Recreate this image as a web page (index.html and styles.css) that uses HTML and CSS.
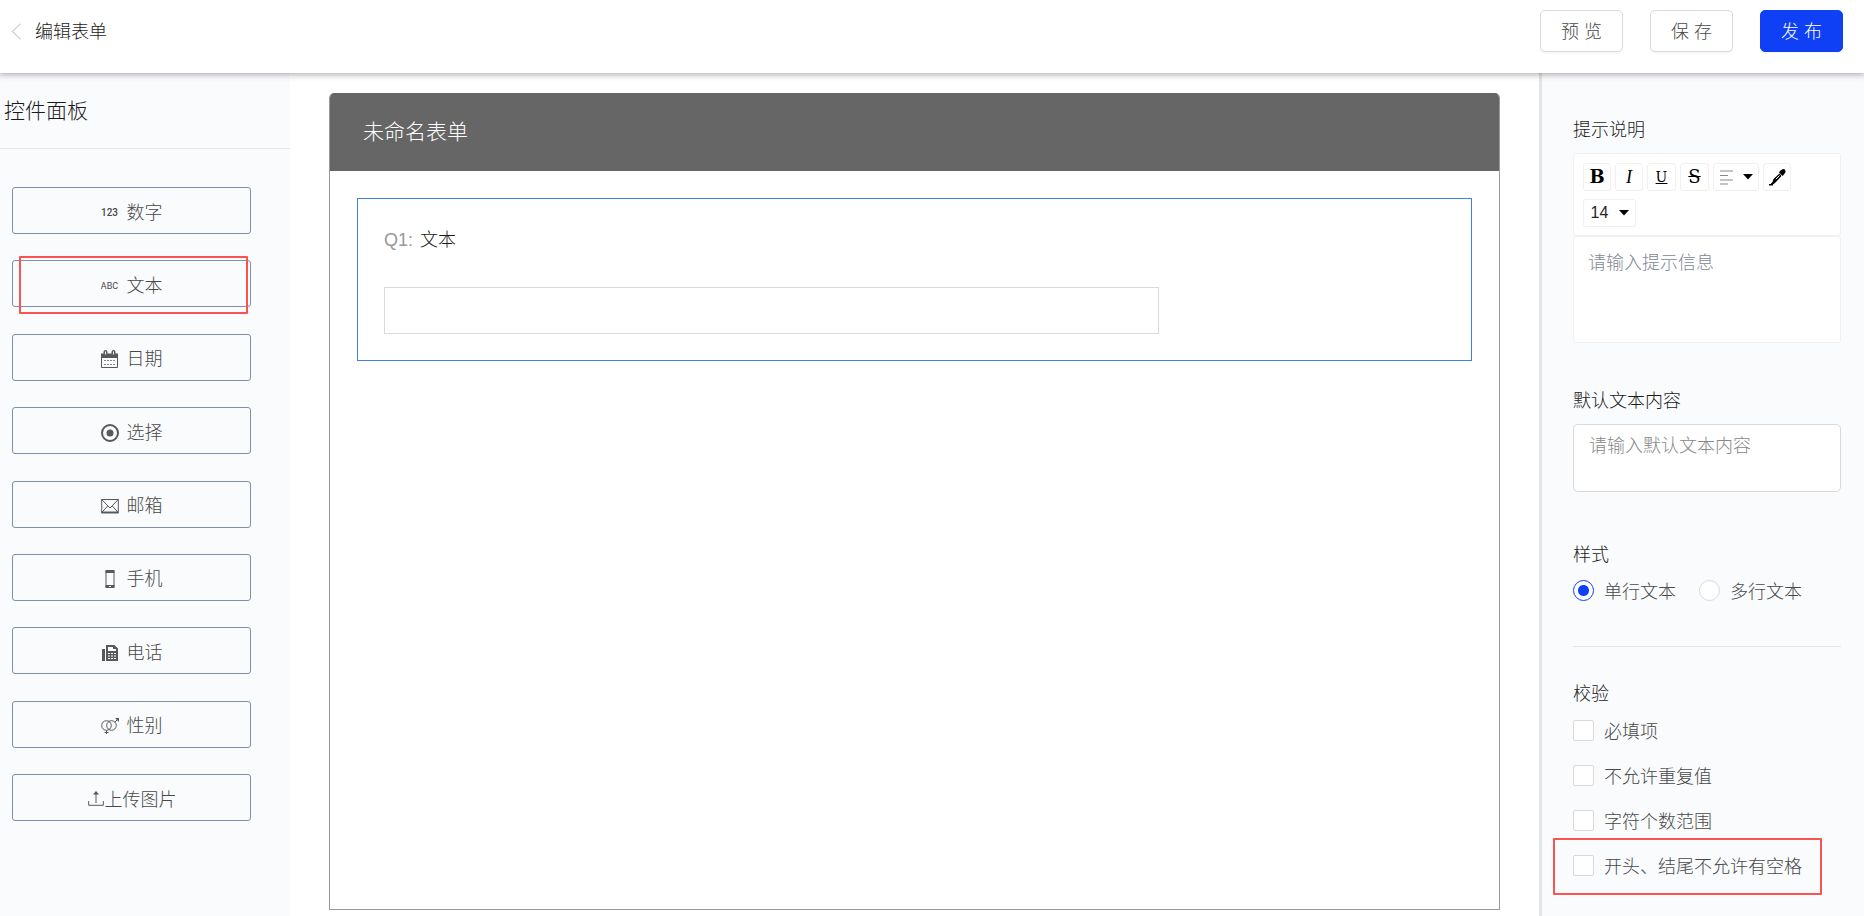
FILE: index.html
```html
<!DOCTYPE html>
<html lang="zh-CN">
<head>
<meta charset="utf-8">
<title>编辑表单</title>
<link rel="stylesheet" href="styles.css">
</head>
<body>
<header class="topbar">
  <a class="back" href="#">
    <svg class="back-icon" viewBox="0 0 12 20" aria-hidden="true"><path d="M10.500 1.500 1.500 10l9 8.500"/></svg>
    <span>编辑表单</span>
  </a>
  <div class="actions">
    <button class="btn" type="button">预 览</button>
    <button class="btn" type="button">保 存</button>
    <button class="btn btn-primary" type="button">发 布</button>
  </div>
</header>
<main class="workspace">
  <aside class="palette">
    <h2 class="palette-title">控件面板</h2>
    <ul class="widgets">
      <li class="widget-item"><button class="widget" type="button"><span class="icon icon-num">123</span>数字</button></li>
      <li class="widget-item"><button class="widget" type="button"><span class="icon icon-abc">ABC</span>文本</button><span class="mark mark-widget"></span></li>
      <li class="widget-item"><button class="widget" type="button"><svg class="icon" viewBox="0 0 18 18"><path class="fill" d="M0 3.500h2.500V2a2 2 0 0 1 4 0v1.500h4V2a2 2 0 0 1 4 0v1.500H17V8H0z"/><path d="M.5 7v10.500h16V7"/><path class="hole" d="M4.500 1.500v3M12.500 1.500v3"/><path class="dots" stroke-dasharray="2 1" d="M3 10.500h11M3 14.500h11"/></svg>日期</button></li>
      <li class="widget-item"><button class="widget" type="button"><svg class="icon" viewBox="0 0 18 18"><circle class="thick" cx="9" cy="9" r="8"/><circle class="fill" cx="9" cy="9" r="3.500"/></svg>选择</button></li>
      <li class="widget-item"><button class="widget" type="button"><svg class="icon" viewBox="0 0 18 18"><path d="M.7 2.500h16.600v13H.7zM.7 2.500 9 11l8.300-8.500M.7 15.500l6-6.500M17.300 15.500l-6-6.500"/><path class="thick" d="M.5 15.500h17"/></svg>邮箱</button></li>
      <li class="widget-item"><button class="widget" type="button"><svg class="icon" viewBox="0 0 18 18"><rect x="5" y=".5" width="8" height="17" rx="1"/><path class="fill" d="M4.500 0h9v3h-9zM4.500 15h9v3h-9z"/><path class="hole" d="M8 16.500h2"/></svg>手机</button></li>
      <li class="widget-item"><button class="widget" type="button"><svg class="icon" viewBox="0 0 18 18"><path class="fill" d="M1 5h3v12H1zM5 7h12v10H5z"/><path class="thick" d="M6 8V2h7l3 3v3"/><path class="fill" d="M12 1v4h4z"/><path class="hole" d="M7 9.500h8M7 12h8M7 14.500h8" stroke-dasharray="2 1"/></svg>电话</button></li>
      <li class="widget-item"><button class="widget" type="button"><svg class="icon" viewBox="0 0 18 18"><circle cx="5.500" cy="8.500" r="4.800"/><circle cx="10.500" cy="8.500" r="4.800"/><path d="M5.500 13.500V17M3.500 15.500h4M14 5l3-3"/><path class="fill" d="M14 1h4v4z"/></svg>性别</button></li>
      <li class="widget-item"><button class="widget widget-tight" type="button"><svg class="icon" viewBox="0 0 18 18"><path d="M1.700 10v4.300h14.600V10"/><path d="M9 12V1.500"/><path class="fill" d="M9 0 6 3.500h6z"/></svg>上传图片</button></li>
    </ul>
  </aside>
  <section class="canvas">
    <div class="form">
      <h1 class="form-title">未命名表单</h1>
      <div class="form-body">
        <div class="question">
          <label class="question-label" for="q1"><span class="question-no">Q1:</span> 文本</label>
          <input class="question-input" id="q1" type="text">
        </div>
      </div>
    </div>
  </section>
  <aside class="settings">
    <h3 class="label">提示说明</h3>
    <div class="editor">
      <div class="toolbar">
        <button class="tool tool-bold" type="button" aria-label="加粗">B</button>
        <button class="tool tool-italic" type="button" aria-label="斜体">I</button>
        <button class="tool tool-under" type="button" aria-label="下划线">U</button>
        <button class="tool tool-strike" type="button" aria-label="删除线">S</button>
        <button class="tool tool-align" type="button" aria-label="对齐">
          <svg class="align-icon" viewBox="0 0 14 15"><path d="M0 1h13M0 5.500h8M0 10h13M0 14h8"/></svg>
          <svg class="caret" viewBox="0 0 10 6"><path d="M0 0h10L5 5.500z"/></svg>
        </button>
        <button class="tool" type="button" aria-label="画笔">
          <svg class="pen" viewBox="0 0 17 17"><path d="M11 2l2-1.500q2-1 3 .5t0 3L14.500 6l-1 1L10 3.500z"/><path d="M10.500 4.500 4.500 10l-1 3-1.500 1.500v1H4L6.500 13.500l6-6.500z"/><path class="shine" d="M10.500 6.500 7 10.200"/><path d="M0 15h4v1.500H0z"/></svg>
        </button>
        <span class="size">
          <select class="size-select" aria-label="字号"><option>14</option></select>
          <svg class="caret" viewBox="0 0 10 6"><path d="M0 0h10L5 5.500z"/></svg>
        </span>
      </div>
      <textarea class="editor-text" aria-label="提示说明" placeholder="请输入提示信息"></textarea>
    </div>
    <label class="label" for="default-text">默认文本内容</label>
    <textarea class="default-text" id="default-text" placeholder="请输入默认文本内容"></textarea>
    <h3 class="label">样式</h3>
    <div class="radios">
      <label class="choice"><input class="radio" type="radio" name="style" checked>单行文本</label>
      <label class="choice"><input class="radio" type="radio" name="style">多行文本</label>
    </div>
    <hr class="divider">
    <h3 class="label">校验</h3>
    <div class="checks">
      <label class="choice"><input class="check" type="checkbox">必填项</label>
      <label class="choice"><input class="check" type="checkbox">不允许重复值</label>
      <label class="choice"><input class="check" type="checkbox">字符个数范围</label>
      <label class="choice"><input class="check" type="checkbox">开头、结尾不允许有空格<span class="mark mark-check"></span></label>
    </div>
  </aside>
</main>
</body>
</html>
```
FILE: styles.css
```css
* { box-sizing: border-box; }
body {
  margin: 0;
  min-height: 100vh;
  display: flex;
  flex-direction: column;
  background: #fff;
  color: #484848;
  font-family: "Liberation Sans", "Noto Sans CJK SC", sans-serif;
  font-size: 18px;
  font-weight: 300;
  line-height: 24px;
}
button, input, textarea, select { font: inherit; color: inherit; }
h1, h2, h3, ul { margin: 0; padding: 0; font-weight: 300; list-style: none; }

.topbar {
  position: relative;
  z-index: 1;
  display: flex;
  justify-content: space-between;
  align-items: flex-start;
  height: 73px;
  padding: 10px 21px 0 11px;
  background: #fff;
  box-shadow: 0 1px 6px 1px rgba(0, 0, 0, .3);
}
.back {
  display: flex;
  align-items: center;
  gap: 13px;
  height: 43px;
  color: #1a1a1a;
  text-decoration: none;
}
.back-icon { width: 11px; height: 19px; fill: none; stroke: #ccc; stroke-width: 1.2; }
.actions { display: flex; gap: 27px; }
.btn {
  width: 83px;
  height: 42px;
  padding: 2px 0 0;
  border: 1px solid #d9d9d9;
  border-radius: 5px;
  background: #fff;
  box-shadow: 0 2px 1px rgba(0, 0, 0, .03);
}
.btn-primary { border-color: #0f40f5; background: #0f40f5; color: #fff; }

.workspace { flex: 1; display: flex; }
.palette { width: 290px; flex: none; background: #fafbfd; }
.palette-title {
  padding: 24px 4px;
  border-bottom: 1px solid #e4e6e9;
  font-size: 21px;
  line-height: 27px;
  color: #1a1a1a;
}
.widgets {
  display: flex;
  flex-direction: column;
  justify-content: space-between;
  min-height: 634px;
  margin: 38px 39px 0 12px;
}
.widget-item { position: relative; display: flex; }
.widget {
  flex: 1;
  display: flex;
  align-items: center;
  justify-content: center;
  gap: 8px;
  height: 47px;
  padding: 4px 0 0;
  border: 1px solid #8090a8;
  border-radius: 3px;
  background: #fafbfd;
}
.widget-tight { gap: 0; }
.icon { width: 18px; height: 18px; line-height: 18px; fill: none; stroke: #595959; stroke-width: 1; }
.icon .fill { fill: #595959; stroke: none; }
.icon .thick { stroke-width: 2; }
.icon .hole { stroke: #fafbfd; }
.icon .dots { stroke: #888; }
.icon-num, .icon-abc { font-family: Roboto, sans-serif; text-align: center; }
.icon-num { font-size: 10px; font-weight: 500; }
.icon-abc { font-size: 9px; font-weight: 400; }

.mark { position: absolute; border: 2px solid #fa5350; border-radius: 1px; pointer-events: none; }
.mark-widget { inset: -4px 3px -7px 7px; }
.mark-check { inset: -17px -20px -16px -20px; }

.canvas { flex: 1; display: flex; padding: 20px 39px 6px; }
.form { flex: 1; border: 1px solid #999; border-top: 0; border-radius: 5px 5px 0 0; overflow: hidden; }
.form-title { padding: 25px 33px 26px; background: #666; color: #fff; font-size: 21px; line-height: 27px; }
.form-body { padding: 27px; }
.question { padding: 29px 26px 26px; border: 1px solid #4080e0; }
.question-label { display: block; margin-bottom: 35px; color: #1a1a1a; }
.question-no { margin-right: 2px; color: #999; }
.question-input { display: block; width: 73%; height: 47px; padding: 0 12px; border: 1px solid #d9d9d9; background: #fff; }

.settings { width: 325px; flex: none; padding: 45px 23px 0 31px; border-left: 3px solid #e4e4e4; background: #fafbfd; }
.label { display: block; margin-bottom: 11px; font-size: 18px; color: #1a1a1a; }
.editor { margin-bottom: 46px; }
.toolbar {
  display: flex;
  flex-wrap: wrap;
  gap: 8px 4px;
  padding: 9px 9px 8px;
  border: 1px solid #f0f0f0;
  border-radius: 3px;
  background: #fff;
}
.tool, .size {
  display: flex;
  align-items: center;
  justify-content: center;
  width: 28px;
  height: 28px;
  padding: 0;
  border: 1px solid #f0f0f0;
  border-radius: 3px;
  background: #fff;
  color: #000;
}
.tool-bold, .tool-under, .tool-strike { font-family: "DejaVu Serif", serif; }
.tool-bold { font-size: 18px; font-weight: 700; }
.tool-italic { font-family: "Liberation Serif", serif; font-size: 18px; font-style: italic; }
.tool-under { width: 29px; font-size: 14px; text-decoration: underline; }
.tool-strike { width: 29px; font-size: 18px; text-decoration: line-through; }
.tool-align { width: 46px; gap: 9px; }
.align-icon { width: 14px; height: 15px; stroke: #888; }
.caret { width: 10px; height: 6px; fill: #000; pointer-events: none; }
.pen { width: 17px; height: 17px; }
.pen .shine { stroke: #fff; }
.size { width: 53px; }
.size-select { width: 28px; padding: 0; border: 0; background: none; appearance: none; font-size: 16px; color: #262626; }
.editor-text, .default-text { display: block; width: 100%; resize: none; background: #fff; }
.editor-text { height: 107px; padding: 14px; border: 1px solid #f0f0f0; border-radius: 3px; }
.editor-text::placeholder { color: #7f8696; }
.default-text { height: 68px; margin-bottom: 51px; padding: 9px 15px; border: 1px solid #d9d9d9; border-radius: 5px; }
.default-text::placeholder { color: #888; }
.radios { display: flex; gap: 23px; margin-top: 13px; }
.choice { position: relative; display: flex; align-items: flex-start; gap: 10px; }
.radio, .check { width: 21px; height: 21px; flex: none; margin: 0; border: 1px solid #d9d9d9; background: #fff; appearance: none; }
.radio { border-radius: 50%; }
.radio:checked { border-color: #0f40f5; background: radial-gradient(circle, #0f40f5 5px, #fff 6px); }
.check { border-radius: 2px; }
.divider { margin: 42px 0 35px; border: 0; border-top: 1px solid #e4e6e9; }
.checks { display: flex; flex-direction: column; align-items: flex-start; gap: 21px; margin-top: 14px; }
```
